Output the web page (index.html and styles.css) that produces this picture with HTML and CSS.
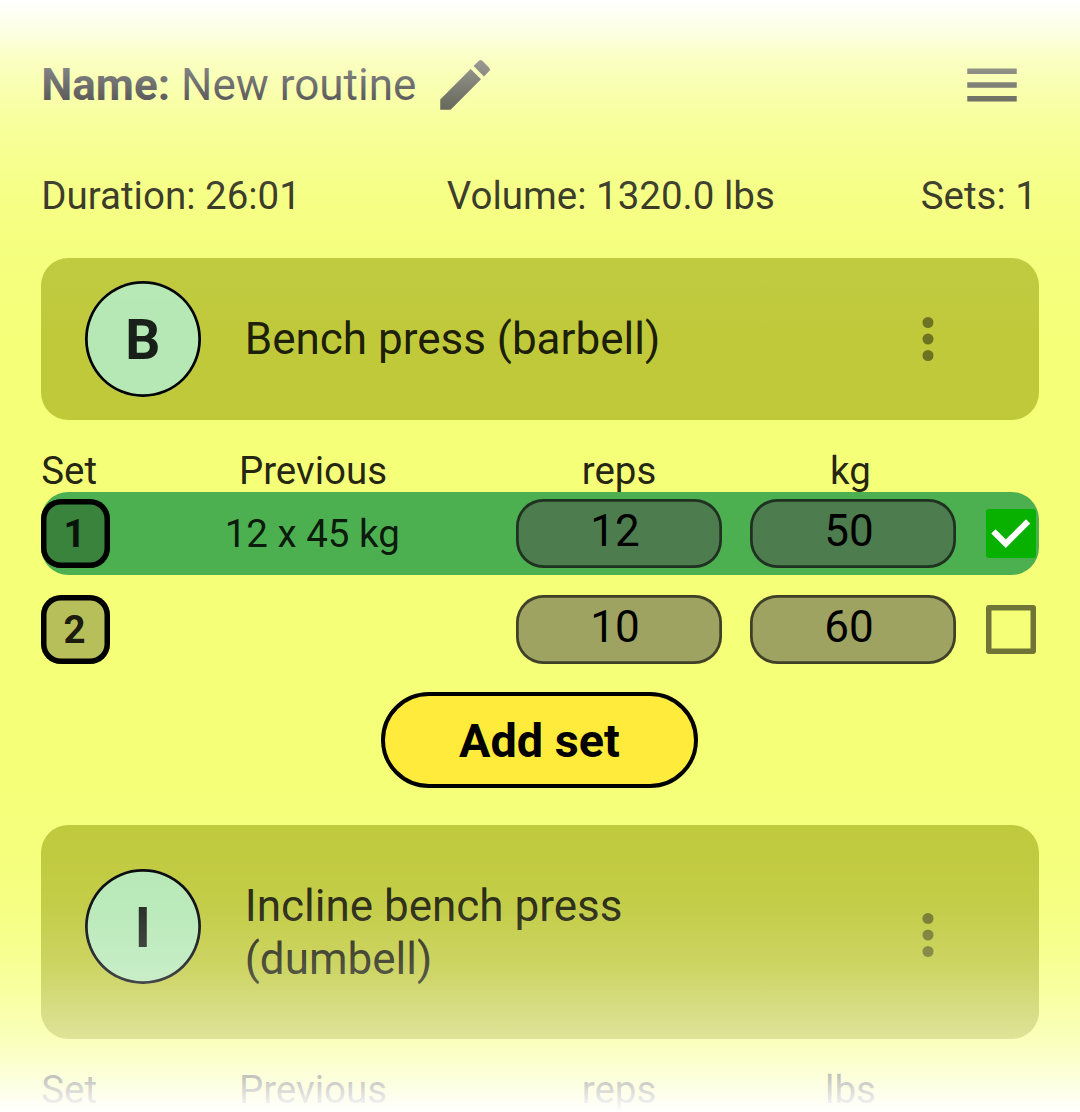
FILE: index.html
```html
<!DOCTYPE html>
<html lang="en">
<head>
<meta charset="utf-8">
<title>New routine</title>
<link rel="stylesheet" href="styles.css">
</head>
<body>
<main class="screen">
  <header class="header">
    <h1 class="title"><b>Name:</b> New routine</h1>
    <svg class="icon" viewBox="0 0 24 24"><path d="M3 17.25V21h3.75L17.81 9.94l-3.75-3.75L3 17.25zM20.71 7.04a1 1 0 0 0 0-1.41l-2.34-2.34a1 1 0 0 0-1.41 0l-1.83 1.83 3.75 3.75 1.83-1.83z"/></svg>
    <svg class="icon menu" viewBox="0 0 24 24"><path d="M3 18h18v-2H3v2zm0-5h18v-2H3v2zm0-7v2h18V6H3z"/></svg>
  </header>
  <section class="stats">
    <span class="duration">Duration: 26:01</span>
    <span class="volume">Volume: 1320.0 lbs</span>
    <span class="count">Sets: 1</span>
  </section>

  <section class="card">
    <div class="avatar">B</div>
    <h2 class="exercise">Bench press (barbell)</h2>
    <svg class="icon more" viewBox="0 0 24 24"><circle cx="12" cy="6" r="2"/><circle cx="12" cy="12" r="2"/><circle cx="12" cy="18" r="2"/></svg>
  </section>
  <div class="row head"><span>Set</span><span class="mid">Previous</span><span class="mid">reps</span><span class="mid unit">kg</span></div>
  <div class="row set done">
    <span class="chip">1</span>
    <span class="mid previous">12 x 45 kg</span>
    <span class="field">12</span>
    <span class="field weight">50</span>
    <span class="check checked"><svg viewBox="0 0 49.5 49.5"><path d="M7.4 22.3 19.8 34.7 42.1 12.4"/></svg></span>
  </div>
  <div class="row set">
    <span class="chip">2</span>
    <span class="mid previous"></span>
    <span class="field">10</span>
    <span class="field weight">60</span>
    <span class="check"></span>
  </div>
  <button class="add">Add set</button>

  <section class="card tall">
    <div class="avatar">I</div>
    <h2 class="exercise">Incline bench press (dumbell)</h2>
    <svg class="icon more" viewBox="0 0 24 24"><circle cx="12" cy="6" r="2"/><circle cx="12" cy="12" r="2"/><circle cx="12" cy="18" r="2"/></svg>
  </section>
  <div class="row head"><span>Set</span><span class="mid">Previous</span><span class="mid">reps</span><span class="mid unit">lbs</span></div>
</main>
</body>
</html>
```
FILE: styles.css
```css
* { box-sizing: border-box; }
body { margin: 0; overflow: hidden; }
.screen {
  position: relative;
  display: flex;
  flex-direction: column;
  height: 1112px;
  padding: 0 41.5px 0 41.25px;
  overflow: hidden;
  background: #f5ff78;
  color: rgba(0, 0, 0, .87);
  font-family: Roboto, sans-serif;
  font-size: 38.5px;
  line-height: 45px;
}
.screen > * { flex-shrink: 0; }
/* white fade over the top and bottom edges */
.screen::after {
  content: "";
  position: absolute;
  inset: 0;
  background:
    linear-gradient(to bottom, #fff 0, rgba(255,255,255,.8) 30px, rgba(255,255,255,.54) 62px, rgba(255,255,255,.36) 100px, rgba(255,255,255,.23) 135px, rgba(255,255,255,.1) 195px, rgba(255,255,255,.04) 260px, transparent 345px),
    linear-gradient(to top, #fff 0, rgba(255,255,255,.75) 32px, rgba(255,255,255,.48) 75px, rgba(255,255,255,.28) 128px, rgba(255,255,255,.2) 152px, rgba(255,255,255,.08) 207px, rgba(255,255,255,.04) 250px, transparent 330px);
}
.header { display: flex; align-items: center; height: 170px; }
.title { margin: 0; width: 390.5px; color: #000; font-size: 44px; font-weight: 400; white-space: nowrap; }
.icon { width: 66px; height: 66px; fill: rgba(0, 0, 0, .87); flex: none; }
.menu { margin-left: auto; margin-right: 13.75px; }
.stats { display: flex; justify-content: space-between; height: 88px; padding: 3px 1.5px 0 0; white-space: nowrap; }
.card {
  display: flex;
  align-items: center;
  height: 162px;
  padding: 0 77.25px 0 43.75px;
  border-radius: 27.5px;
  background: #bfc939;
}
.avatar {
  width: 115.5px;
  height: 115.5px;
  border-radius: 50%;
  background: #b5e8b5;
  box-shadow: inset 0 0 0 2.75px #000;
  font-size: 55px;
  font-weight: 700;
  line-height: 119px;
  text-align: center;
}
.exercise { margin: 1px 0 0 44.25px; width: 480px; font-size: 44px; font-weight: 400; line-height: 53px; }
.more { margin-left: auto; fill: rgba(0, 0, 0, .43); }
.tall { height: 214.5px; margin-top: 36.5px; }
.tall .avatar { margin-bottom: 11px; }
.tall .more { margin-top: 5.5px; }
.row { display: grid; grid-template-columns: 68.75px 406px 206px 206px 49.5px; align-items: center; }
.row > :nth-child(4) { margin-left: 28px; margin-right: -28px; }
.row > :nth-child(5) { margin-left: 58px; }
.mid { text-align: center; }
.previous { padding-right: 1.5px; }
.head { height: 72px; padding-top: 28px; line-height: 46px; }
.row > .unit { padding-right: 5px; }
.set { height: 82.5px; border-radius: 27.5px; }
.done { background: #4caf50; margin-bottom: 13.5px; }
.chip {
  height: 68.75px;
  padding-right: 2px;
  border-radius: 20px;
  background: rgba(0, 0, 0, .25);
  box-shadow: inset 0 0 0 5.5px #000;
  font-weight: 700;
  line-height: 70px;
  text-align: center;
}
.field {
  height: 68.75px;
  padding-right: 8px;
  border-radius: 27.5px;
  background: rgba(78, 78, 78, .52);
  box-shadow: inset 0 0 0 2.75px rgba(0, 0, 0, .6);
  color: #000;
  font-size: 44px;
  line-height: 64px;
  text-align: center;
}
.check { width: 49.5px; height: 49.5px; border-radius: 3px; box-shadow: inset 0 0 0 5.5px rgba(0, 0, 0, .54); }
.checked { background: #08b000; box-shadow: none; }
.checked svg { display: block; width: 49.5px; height: 49.5px; fill: none; stroke: #fff; stroke-width: 6; }
.add {
  align-self: center;
  width: 316.5px;
  height: 96.25px;
  margin-top: 21.5px;
  margin-right: 1px;
  padding: 2px 0 0;
  border: 4px solid #000;
  border-radius: 48px;
  background: #ffeb3b;
  color: #000;
  font: 700 46.75px/86px Roboto, sans-serif;
}
```
